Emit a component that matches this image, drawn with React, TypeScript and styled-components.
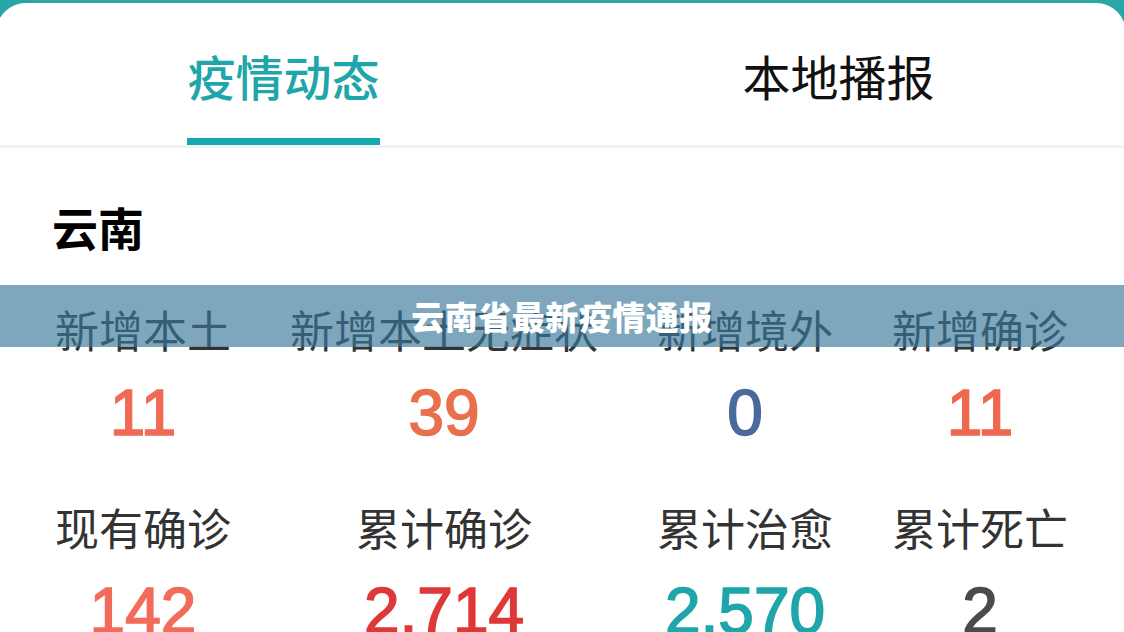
import React from 'react';
import styled, { createGlobalStyle } from 'styled-components';

const GlobalStyle = createGlobalStyle`
  html, body {
    margin: 0;
    padding: 0;
    overflow: hidden;
  }
  body {
    font-family: 'Noto Sans CJK SC', 'Noto Sans', sans-serif;
  }
`;

const teal = '#1fa6aa';

const Page = styled.div`
  position: relative;
  width: 1124px;
  height: 632px;
  overflow: hidden;
  background: #2aa6a8;
  padding-top: 3px;
  box-sizing: border-box;
`;

const Card = styled.div`
  margin: 0 -2px 0 -4px;
  height: 100%;
  background: #fff;
  border-radius: 30px 30px 0 0;
`;

const TabBar = styled.div`
  display: grid;
  grid-template-columns: 1fr 1fr;
  padding: 0 10px;
  border-bottom: 3px solid #f2f2f2;
`;

const Tab = styled.div`
  display: flex;
  flex-direction: column;
  align-items: center;
  padding-top: 48px;
  height: 142px;
  box-sizing: border-box;
`;

const TabLabel = styled.div<{ $active?: boolean }>`
  position: relative;
  font-size: 48px;
  line-height: 1;
  font-weight: ${({ $active }) => ($active ? 500 : 400)};
  color: ${({ $active }) => ($active ? teal : '#111')};
`;

const Underline = styled.div`
  position: absolute;
  left: 0;
  right: 0;
  top: 87px;
  height: 7px;
  background: #19a8ad;
`;

const Region = styled.h2`
  margin: 55px 0 0;
  padding-left: 56px;
  font-size: 46px;
  line-height: 1;
  font-weight: 700;
  color: #000;
`;

const StatsGrid = styled.div`
  display: grid;
  grid-template-columns: repeat(4, auto);
  justify-content: space-between;
  row-gap: 60px;
  padding: 58px 58px 0 59px;
`;

const Stat = styled.div`
  display: flex;
  flex-direction: column;
  align-items: center;
  gap: 30px;
`;

const StatLabel = styled.div`
  font-size: 44px;
  line-height: 1;
  color: #333;
  white-space: nowrap;
`;

// medium-weight digits: regular face thickened by a thin stroke
const StatValue = styled.div<{ $color: string }>`
  font-family: 'Liberation Sans', Arial, sans-serif;
  font-size: 64px;
  line-height: 1;
  font-weight: 400;
  color: ${({ $color }) => $color};
  -webkit-text-stroke: 1.6px ${({ $color }) => $color};
`;

const Banner = styled.div`
  position: absolute;
  left: 0;
  right: 0;
  top: 285px;
  height: 62px;
  display: flex;
  align-items: center;
  justify-content: center;
  background: rgba(57, 120, 155, 0.65);
  color: #fff;
  font-size: 33px;
  font-weight: 900;
  letter-spacing: 0.5px;
`;

const stats = [
  { label: '新增本土', value: '11', color: '#f06a55' },
  { label: '新增本土无症状', value: '39', color: '#e8704d' },
  { label: '新增境外', value: '0', color: '#4a6a9c' },
  { label: '新增确诊', value: '11', color: '#f0664f' },
  { label: '现有确诊', value: '142', color: '#f26b5b' },
  { label: '累计确诊', value: '2,714', color: '#de3838' },
  { label: '累计治愈', value: '2,570', color: '#1ea6aa' },
  { label: '累计死亡', value: '2', color: '#4b4b4b' },
];

const App: React.FC = () => {
  return (
    <Page>
      <GlobalStyle />
      <Card>
        <TabBar>
          <Tab>
            <TabLabel $active>
              疫情动态
              <Underline />
            </TabLabel>
          </Tab>
          <Tab>
            <TabLabel>本地播报</TabLabel>
          </Tab>
        </TabBar>
        <Region>云南</Region>
        <StatsGrid>
          {stats.map((s, i) => (
            <Stat key={i}>
              <StatLabel>{s.label}</StatLabel>
              <StatValue $color={s.color}>{s.value}</StatValue>
            </Stat>
          ))}
        </StatsGrid>
      </Card>
      <Banner>云南省最新疫情通报</Banner>
    </Page>
  );
};

export default App;
